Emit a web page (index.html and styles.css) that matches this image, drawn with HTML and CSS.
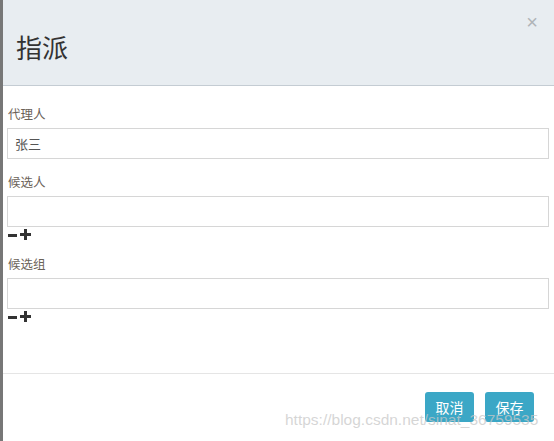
FILE: index.html
```html
<!DOCTYPE html>
<html lang="zh">
<head>
<meta charset="utf-8">
<link rel="stylesheet" href="styles.css">
</head>
<body>
<div class="page">
  <div class="dialog">
    <div class="header">
      <h1 class="title">指派</h1>
      <span class="close">×</span>
    </div>
    <div class="body">
      <div class="group">
        <label class="label">代理人</label>
        <div class="input">张三</div>
      </div>
      <div class="group">
        <label class="label">候选人</label>
        <div class="input"></div>
        <div class="ops">
          <svg width="9" height="10" viewBox="0 0 9 10"><rect x="0" y="4" width="9" height="3" fill="#333"/></svg>
          <svg width="11" height="11" viewBox="0 0 11 11"><rect x="0" y="4" width="11" height="3" fill="#333"/><rect x="4" y="0" width="3" height="11" fill="#333"/></svg>
        </div>
      </div>
      <div class="group">
        <label class="label">候选组</label>
        <div class="input"></div>
        <div class="ops">
          <svg width="9" height="10" viewBox="0 0 9 10"><rect x="0" y="4" width="9" height="3" fill="#333"/></svg>
          <svg width="11" height="11" viewBox="0 0 11 11"><rect x="0" y="4" width="11" height="3" fill="#333"/><rect x="4" y="0" width="3" height="11" fill="#333"/></svg>
        </div>
      </div>
    </div>
    <div class="footer">
      <button class="btn">取消</button>
      <button class="btn">保存</button>
    </div>
    <div class="watermark">https://blog.csdn.net/sinat_36759535</div>
  </div>
</div>
</body>
</html>
```

FILE: styles.css
```css
html, body {
  margin: 0;
  padding: 0;
  background: #fff;
}
.page {
  width: 554px;
  height: 441px;
  display: flex;
  border-left: 3px solid #777;
  box-sizing: border-box;
  overflow: hidden;
  font-family: "Liberation Sans", "Noto Sans CJK SC", sans-serif;
}
.dialog {
  position: relative;
  flex: 1;
  display: flex;
  flex-direction: column;
}
.header {
  height: 85px;
  background: #e8edf1;
  border-bottom: 1px solid #c4ccd3;
  display: flex;
  align-items: center;
  padding-left: 13px;
  position: relative;
}
.title {
  margin: 8px 0 0 0;
  font-size: 26px;
  font-weight: normal;
  color: #333;
  font-family: "Noto Sans CJK SC", sans-serif;
}
.close {
  position: absolute;
  right: 16px;
  top: 11px;
  font-size: 20px;
  color: #b0b4b8;
  font-family: "Liberation Sans", sans-serif;
}
.body {
  padding: 19px 5px 0 4px;
  display: flex;
  flex-direction: column;
  height: 286px;
  box-sizing: border-box;
}
.group {
  display: flex;
  flex-direction: column;
  margin-bottom: 14px;
}
.label {
  font-size: 12.5px;
  line-height: 18px;
  color: #6b6258;
  padding-left: 1px;
  margin-bottom: 5px;
  font-family: "Noto Sans CJK SC", sans-serif;
}
.input {
  height: 31px;
  box-sizing: border-box;
  border: 1px solid #d6d6d6;
  padding: 0 7px;
  font-size: 13px;
  line-height: 29px;
  color: #555;
  font-family: "Noto Sans CJK SC", sans-serif;
}
.ops {
  height: 15px;
  display: flex;
  align-items: center;
  gap: 3px;
  padding-left: 1px;
  margin-bottom: -1px;
}
.ops svg {
  display: block;
}
.footer {
  border-top: 1px solid #e5e5e5;
  margin-top: auto;
  height: 68px;
  box-sizing: border-box;
  display: flex;
  justify-content: flex-end;
  align-items: flex-start;
  gap: 11px;
  padding: 18px 20px 0 0;
}
.btn {
  width: 49px;
  height: 30px;
  background: #3ba7c6;
  color: #fff;
  border: none;
  border-radius: 3px;
  font-size: 14px;
  padding: 0;
  font-family: "Noto Sans CJK SC", sans-serif;
}
.watermark {
  position: absolute;
  left: 282px;
  top: 411px;
  font-size: 15.5px;
  color: rgba(200, 200, 200, 0.75);
  font-family: "Liberation Sans", sans-serif;
  white-space: nowrap;
}
```
